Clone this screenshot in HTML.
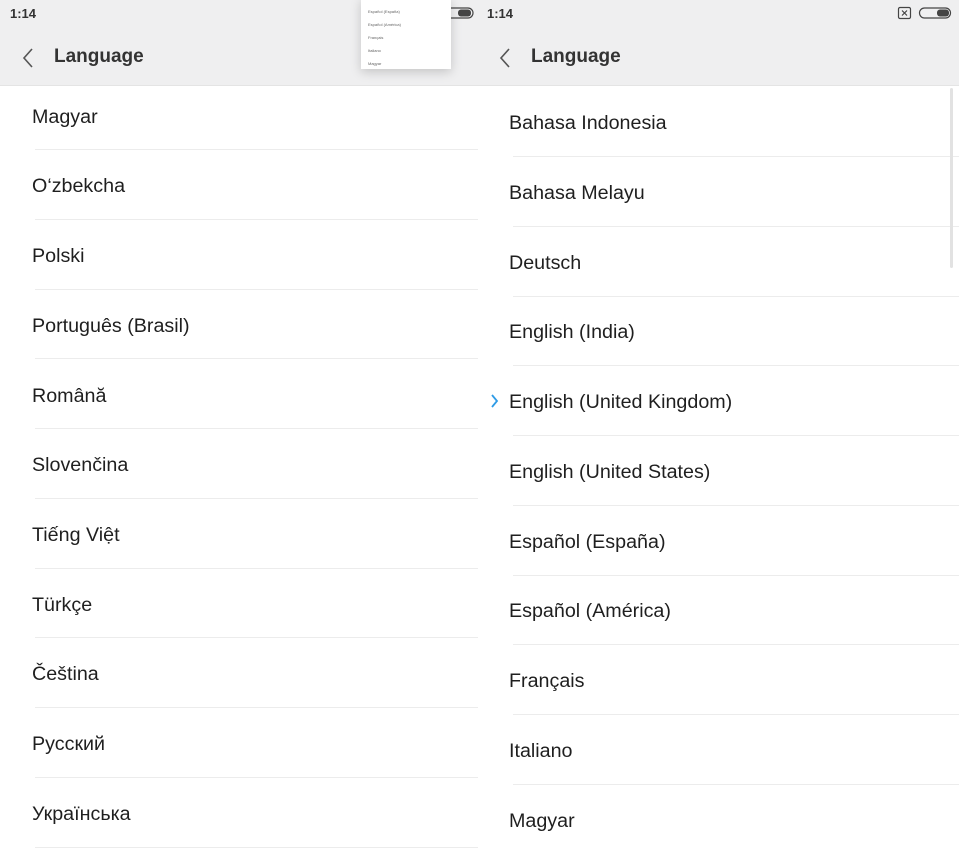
<!DOCTYPE html>
<html><head><meta charset="utf-8"><style>
*{margin:0;padding:0;box-sizing:border-box}
body{width:959px;height:853px;overflow:hidden;background:#fff;font-family:"Liberation Sans","DejaVu Sans",sans-serif;position:relative;color:#1f1f1f}
.hdr{position:absolute;top:0;height:86px;background:#efeff0;border-bottom:1px solid #e4e4e4}
.time{position:absolute;top:6px;font-size:13px;font-weight:bold;color:#333}
.title{position:absolute;top:46px;font-size:19px;font-weight:bold;color:#333}
.it{position:absolute;font-size:19.7px;line-height:24px;white-space:nowrap}
.dv{position:absolute;height:1px;background:#ececec}
</style></head><body>
<div class="hdr" style="left:0;width:480px"></div>
<div class="hdr" style="left:480px;width:479px"></div>
<div class="time" style="left:10px">1:14</div>
<div class="time" style="left:487px">1:14</div>
<svg style="position:absolute;left:20px;top:47px" width="16" height="22"><path d="M12 2 L4 11 L12 20" fill="none" stroke="#555" stroke-width="1.6"/></svg>
<svg style="position:absolute;left:497px;top:47px" width="16" height="22"><path d="M12 2 L4 11 L12 20" fill="none" stroke="#555" stroke-width="1.6"/></svg>
<div class="title" style="left:54px">Language</div>
<div class="title" style="left:531px">Language</div>
<svg style="position:absolute;left:896px;top:6px" width="60" height="15"><rect x="2.5" y="1.5" width="12" height="11" rx="1.5" fill="none" stroke="#444" stroke-width="1.2"/><path d="M6 4.5 L11 9.5 M11 4.5 L6 9.5" stroke="#444" stroke-width="1.2"/><rect x="23.5" y="2" width="31" height="10" rx="5" fill="none" stroke="#444" stroke-width="1.2"/><rect x="41" y="3.5" width="12" height="7" rx="3" fill="#444"/></svg>
<svg style="position:absolute;left:440px;top:6px" width="36" height="15"><rect x="1" y="2" width="32" height="10" rx="5" fill="none" stroke="#444" stroke-width="1.2"/><rect x="18" y="3.5" width="13" height="7" rx="3" fill="#444"/></svg>
<div style="position:absolute;left:361px;top:-2px;width:90px;height:71px;background:#fff;box-shadow:0 3px 10px rgba(0,0,0,.18);font-size:4px;color:#666">
<div style="position:absolute;left:7px;top:11px">Español (España)</div>
<div style="position:absolute;left:7px;top:24px">Español (América)</div>
<div style="position:absolute;left:7px;top:37px">Français</div>
<div style="position:absolute;left:7px;top:50px">Italiano</div>
<div style="position:absolute;left:7px;top:63px">Magyar</div>
</div>
<div class="it" style="left:32px;top:105px">Magyar</div>
<div class="it" style="left:32px;top:174px">O‘zbekcha</div>
<div class="it" style="left:32px;top:244px">Polski</div>
<div class="it" style="left:32px;top:314px">Português (Brasil)</div>
<div class="it" style="left:32px;top:384px">Română</div>
<div class="it" style="left:32px;top:453px">Slovenčina</div>
<div class="it" style="left:32px;top:523px">Tiếng Việt</div>
<div class="it" style="left:32px;top:593px">Türkçe</div>
<div class="it" style="left:32px;top:662px">Čeština</div>
<div class="it" style="left:32px;top:732px">Русский</div>
<div class="it" style="left:32px;top:802px">Українська</div>
<div class="dv" style="left:35px;width:443px;top:149px"></div>
<div class="dv" style="left:35px;width:443px;top:219px"></div>
<div class="dv" style="left:35px;width:443px;top:289px"></div>
<div class="dv" style="left:35px;width:443px;top:358px"></div>
<div class="dv" style="left:35px;width:443px;top:428px"></div>
<div class="dv" style="left:35px;width:443px;top:498px"></div>
<div class="dv" style="left:35px;width:443px;top:568px"></div>
<div class="dv" style="left:35px;width:443px;top:637px"></div>
<div class="dv" style="left:35px;width:443px;top:707px"></div>
<div class="dv" style="left:35px;width:443px;top:777px"></div>
<div class="dv" style="left:35px;width:443px;top:847px"></div>
<div class="it" style="left:509px;top:111px">Bahasa Indonesia</div>
<div class="it" style="left:509px;top:181px">Bahasa Melayu</div>
<div class="it" style="left:509px;top:251px">Deutsch</div>
<div class="it" style="left:509px;top:320px">English (India)</div>
<div class="it" style="left:509px;top:390px">English (United Kingdom)</div>
<div class="it" style="left:509px;top:460px">English (United States)</div>
<div class="it" style="left:509px;top:530px">Español (España)</div>
<div class="it" style="left:509px;top:599px">Español (América)</div>
<div class="it" style="left:509px;top:669px">Français</div>
<div class="it" style="left:509px;top:739px">Italiano</div>
<div class="it" style="left:509px;top:809px">Magyar</div>
<svg style="position:absolute;left:490px;top:393px" width="10" height="16"><path d="M2 2 L7 8 L2 14" fill="none" stroke="#2e9be6" stroke-width="1.8"/></svg>
<div class="dv" style="left:513px;width:446px;top:156px"></div>
<div class="dv" style="left:513px;width:446px;top:226px"></div>
<div class="dv" style="left:513px;width:446px;top:296px"></div>
<div class="dv" style="left:513px;width:446px;top:365px"></div>
<div class="dv" style="left:513px;width:446px;top:435px"></div>
<div class="dv" style="left:513px;width:446px;top:505px"></div>
<div class="dv" style="left:513px;width:446px;top:575px"></div>
<div class="dv" style="left:513px;width:446px;top:644px"></div>
<div class="dv" style="left:513px;width:446px;top:714px"></div>
<div class="dv" style="left:513px;width:446px;top:784px"></div>
<div style="position:absolute;left:950px;top:88px;width:3px;height:180px;background:#e2e2e2;border-radius:2px"></div>
</body></html>
